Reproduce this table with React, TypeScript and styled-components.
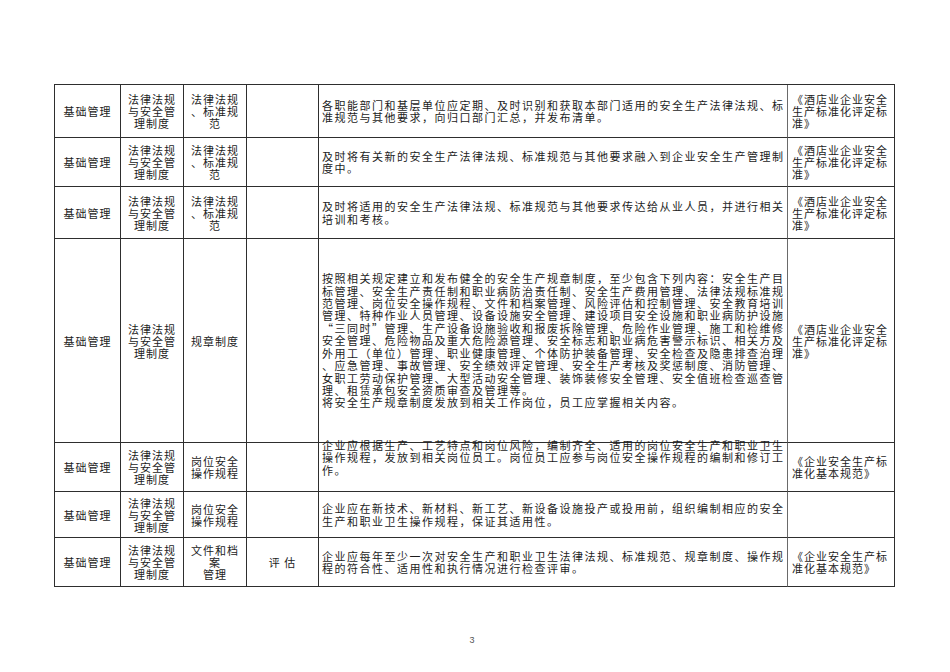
import React from "react";
import styled, { createGlobalStyle } from "styled-components";

const GlobalStyle = createGlobalStyle`
  html, body {
    margin: 0;
    padding: 0;
    background: #ffffff;
  }
  body {
    font-family: "Noto Sans CJK SC", "Liberation Sans", sans-serif;
    color: #1c1c1c;
  }
`;

const Page = styled.div`
  width: 950px;
  height: 672px;
  box-sizing: border-box;
  padding-top: 84px;
  display: flex;
  flex-direction: column;
  overflow: hidden;
  background: #ffffff;
`;

const Sheet = styled.div`
  margin-left: 54px;
  display: grid;
  grid-template-columns: 66px 63px 63px 72px 469px 107px;
  grid-template-rows: 53px 49px 52px 204px 49px 46px 49px;
  width: max-content;
  border-top: 1px solid #2e2e2e;
  border-left: 1px solid #2e2e2e;
  font-family: "Noto Sans CJK SC", sans-serif;
  font-size: 11px;
  text-spacing-trim: space-all;
`;

const Cell = styled.div<{ $divider?: string }>`
  box-sizing: border-box;
  border-right: 1px solid ${(p) => p.$divider ?? "#2e2e2e"};
  border-bottom: 1px solid #2e2e2e;
  display: flex;
  align-items: center;
  min-width: 0;
`;

const LabelCell = styled(Cell)`
  justify-content: center;
  padding: 0 4px;
`;

const LabelText = styled.div`
  width: 100%;
  text-align: center;
  line-height: 12px;
  letter-spacing: 1px;
  line-break: anywhere;
  word-break: break-all;
  white-space: pre-line;
  color: #1c1c1c;
`;

const ContentCell = styled(Cell)<{ $raised?: boolean }>`
  align-items: ${(p) => (p.$raised ? "flex-start" : "center")};
  padding: 0 2px 0 3px;
  overflow: visible;
`;

const ContentText = styled.div<{ $raised?: boolean }>`
  width: 100%;
  margin-top: ${(p) => (p.$raised ? "-4px" : "0")};
  line-height: 12.4px;
  letter-spacing: 1.5px;
  line-break: anywhere;
  word-break: break-all;
  color: #1c1c1c;
`;

const Paragraph = styled.p`
  margin: 0;
`;

const SourceCell = styled(Cell)`
  padding: 0 2px 0 4px;
`;

const SourceText = styled.div`
  width: 100%;
  line-height: 12px;
  letter-spacing: 1px;
  line-break: anywhere;
  word-break: break-all;
  color: #1c1c1c;
`;

const PageNumber = styled.div`
  margin-top: 48px;
  width: 944px;
  text-align: center;
  font-family: "Liberation Sans", sans-serif;
  font-size: 9px;
  line-height: 10px;
  color: #555555;
`;

type Row = {
  cat: string;
  group: string;
  item: string;
  extra: string;
  content: string[];
  source: string;
  raised?: boolean;
};

const HOTEL = "《酒店业企业安全生产标准化评定标准》";
const BASIC = "《企业安全生产标准化基本规范》";

const rows: Row[] = [
  {
    cat: "基础管理",
    group: "法律法规与安全管理制度",
    item: "法律法规、标准规范",
    extra: "",
    content: [
      "各职能部门和基层单位应定期、及时识别和获取本部门适用的安全生产法律法规、标准规范与其他要求，向归口部门汇总，并发布清单。",
    ],
    source: HOTEL,
  },
  {
    cat: "基础管理",
    group: "法律法规与安全管理制度",
    item: "法律法规、标准规范",
    extra: "",
    content: [
      "及时将有关新的安全生产法律法规、标准规范与其他要求融入到企业安全生产管理制度中。",
    ],
    source: HOTEL,
  },
  {
    cat: "基础管理",
    group: "法律法规与安全管理制度",
    item: "法律法规、标准规范",
    extra: "",
    content: [
      "及时将适用的安全生产法律法规、标准规范与其他要求传达给从业人员，并进行相关培训和考核。",
    ],
    source: HOTEL,
  },
  {
    cat: "基础管理",
    group: "法律法规与安全管理制度",
    item: "规章制度",
    extra: "",
    content: [
      "按照相关规定建立和发布健全的安全生产规章制度，至少包含下列内容：安全生产目标管理、安全生产责任制和职业病防治责任制、安全生产费用管理、法律法规标准规范管理、岗位安全操作规程、文件和档案管理、风险评估和控制管理、安全教育培训管理、特种作业人员管理、设备设施安全管理、建设项目安全设施和职业病防护设施“三同时”管理、生产设备设施验收和报废拆除管理、危险作业管理、施工和检维修安全管理、危险物品及重大危险源管理、安全标志和职业病危害警示标识、相关方及外用工（单位）管理、职业健康管理、个体防护装备管理、安全检查及隐患排查治理、应急管理、事故管理、安全绩效评定管理、安全生产考核及奖惩制度、消防管理、女职工劳动保护管理、大型活动安全管理、装饰装修安全管理、安全值班检查巡查管理、租赁承包安全资质审查及管理等。",
      "将安全生产规章制度发放到相关工作岗位，员工应掌握相关内容。",
    ],
    source: HOTEL,
  },
  {
    cat: "基础管理",
    group: "法律法规与安全管理制度",
    item: "岗位安全操作规程",
    extra: "",
    content: [
      "企业应根据生产、工艺特点和岗位风险，编制齐全、适用的岗位安全生产和职业卫生操作规程，发放到相关岗位员工。岗位员工应参与岗位安全操作规程的编制和修订工作。",
    ],
    source: BASIC,
    raised: true,
  },
  {
    cat: "基础管理",
    group: "法律法规与安全管理制度",
    item: "岗位安全操作规程",
    extra: "",
    content: [
      "企业应在新技术、新材料、新工艺、新设备设施投产或投用前，组织编制相应的安全生产和职业卫生操作规程，保证其适用性。",
    ],
    source: "",
  },
  {
    cat: "基础管理",
    group: "法律法规与安全管理制度",
    item: "文件和档案\n管理",
    extra: "评 估",
    content: [
      "企业应每年至少一次对安全生产和职业卫生法律法规、标准规范、规章制度、操作规程的符合性、适用性和执行情况进行检查评审。",
    ],
    source: BASIC,
  },
];

export default function App() {
  return (
    <>
      <GlobalStyle />
      <Page>
        <Sheet>
          {rows.map((r, i) => (
            <React.Fragment key={i}>
              <LabelCell>
                <LabelText>{r.cat}</LabelText>
              </LabelCell>
              <LabelCell>
                <LabelText>{r.group}</LabelText>
              </LabelCell>
              <LabelCell>
                <LabelText>{r.item}</LabelText>
              </LabelCell>
              <LabelCell>
                <LabelText>{r.extra}</LabelText>
              </LabelCell>
              <ContentCell $raised={r.raised} $divider="#6a6a6a">
                <ContentText $raised={r.raised}>
                  {r.content.map((p, j) => (
                    <Paragraph key={j}>{p}</Paragraph>
                  ))}
                </ContentText>
              </ContentCell>
              <SourceCell>
                <SourceText>{r.source}</SourceText>
              </SourceCell>
            </React.Fragment>
          ))}
        </Sheet>
        <PageNumber>3</PageNumber>
      </Page>
    </>
  );
}
